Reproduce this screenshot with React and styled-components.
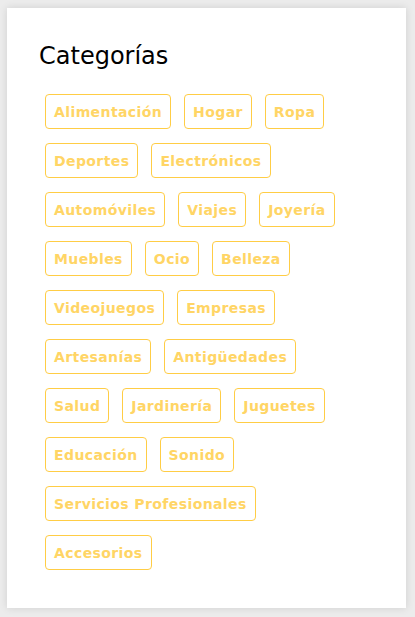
import React from 'react';
import styled, { createGlobalStyle } from 'styled-components';

const GlobalStyle = createGlobalStyle`
  html, body {
    margin: 0;
    padding: 0;
    background: #ececec;
  }
  body {
    padding: 8px 9px 9px 7px;
    font-family: "DejaVu Sans", sans-serif;
  }
`;

const Card = styled.section`
  background: #ffffff;
  box-shadow: 0 0 8px rgba(0, 0, 0, 0.12);
  padding: 34px 32px 40px 32px;
  height: 600px;
  box-sizing: border-box;
`;

const Title = styled.h2`
  margin: 0 0 17px 0;
  font-size: 24px;
  font-weight: 500;
  color: #000;
  line-height: 28px;
`;

const TagList = styled.div`
  display: flex;
  flex-wrap: wrap;
`;

const Tag = styled.a`
  display: inline-flex;
  align-items: center;
  height: 35px;
  box-sizing: border-box;
  margin: 7px 7px 7px 6px;
  padding: 0 8px;
  border: 1px solid #ffcd45;
  border-radius: 4px;
  color: #ffd565;
  font-size: 14px;
  font-weight: 700;
  letter-spacing: 0.4px;
  text-decoration: none;
  cursor: pointer;
`;

const categories = [
  'Alimentación', 'Hogar', 'Ropa', 'Deportes', 'Electrónicos', 'Automóviles',
  'Viajes', 'Joyería', 'Muebles', 'Ocio', 'Belleza', 'Videojuegos', 'Empresas',
  'Artesanías', 'Antigüedades', 'Salud', 'Jardinería', 'Juguetes', 'Educación',
  'Sonido', 'Servicios Profesionales', 'Accesorios',
];

const App = () => (
  <>
    <GlobalStyle />
    <Card>
      <Title>Categorías</Title>
      <TagList>
        {categories.map((c) => (
          <Tag key={c}>{c}</Tag>
        ))}
      </TagList>
    </Card>
  </>
);

export default App;
